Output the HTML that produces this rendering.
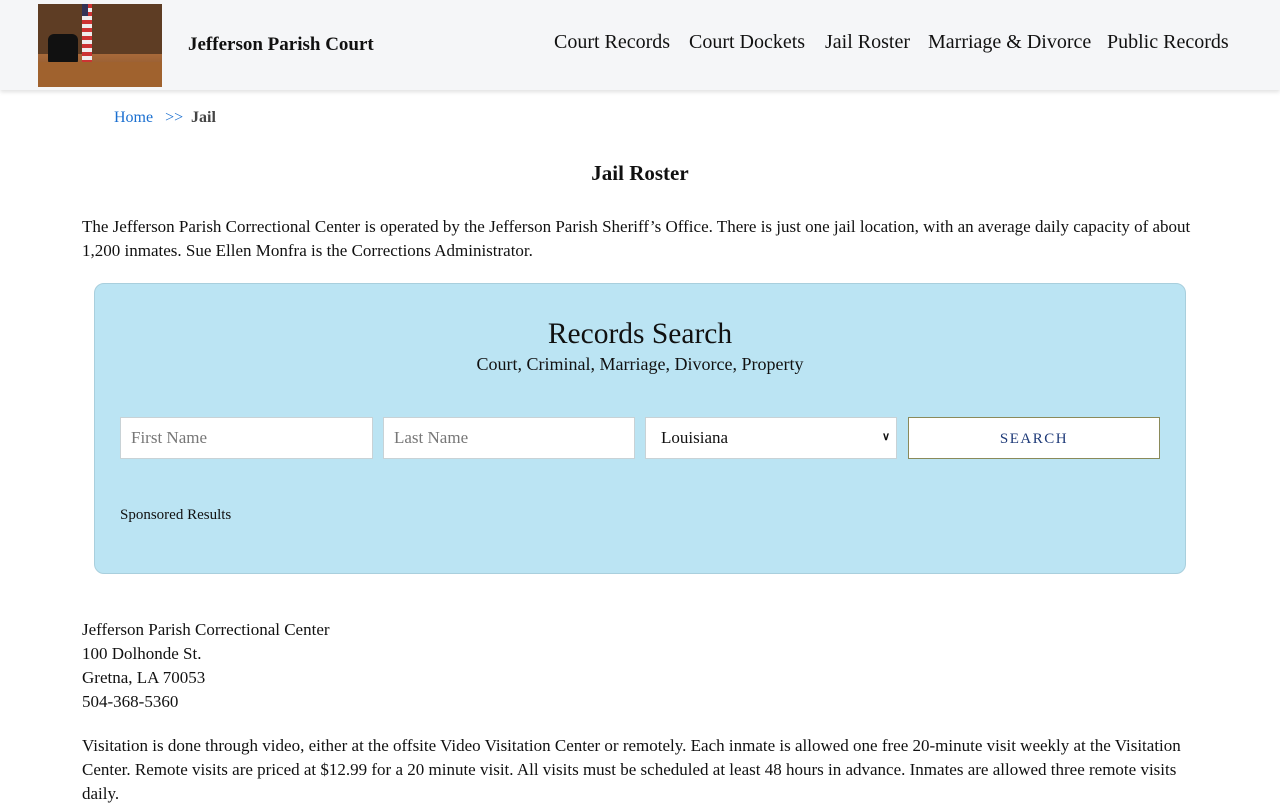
<!DOCTYPE html>
<html><head><meta charset="utf-8"><style>
body{margin:0;background:#fff;font-family:"Liberation Serif",serif;color:#111;}
.hdr{position:absolute;left:0;top:0;width:1280px;height:90px;background:#f5f6f8;box-shadow:0 2px 4px rgba(0,0,0,.12);}
.logo{position:absolute;left:38px;top:4px;width:124px;height:83px;background:linear-gradient(180deg,#6b4a2e 0%,#8a5a32 40%,#a86a3a 60%,#7a4a26 100%);overflow:hidden}
.nav a{position:absolute;top:31px;font-size:20px;color:#111;text-decoration:none;white-space:nowrap}
.t{position:absolute;white-space:nowrap}
p.b{position:absolute;left:82px;margin:0;font-size:17px;line-height:24px;width:1118px}
.box{position:absolute;left:94px;top:283px;width:1090px;height:289px;background:#bbe4f3;border:1px solid #a9cfdd;border-radius:10px}
.in{position:absolute;top:417px;height:42px;background:#fff;border:1px solid #c8d2d6;box-sizing:border-box;font-size:17px;color:#777;padding:10px 10px;font-family:"Liberation Serif",serif}
</style></head><body>
<div class="hdr">
<div class="logo">
<div style="position:absolute;left:0;top:0;width:124px;height:50px;background:#5e3d24"></div>
<div style="position:absolute;left:44px;top:0;width:10px;height:58px;background:repeating-linear-gradient(180deg,#c33 0 4px,#eee 4px 8px)"></div>
<div style="position:absolute;left:44px;top:0;width:6px;height:12px;background:#335"></div>
<div style="position:absolute;left:10px;top:30px;width:30px;height:32px;background:#111;border-radius:6px"></div>
<div style="position:absolute;left:0;top:58px;width:124px;height:25px;background:#a0622e"></div>
</div>
<div class="t" style="left:188px;top:34px;font-size:19px;font-weight:bold;color:#111">Jefferson Parish Court</div>
<div class="nav">
<a style="left:554px">Court Records</a>
<a style="left:689px">Court Dockets</a>
<a style="left:825px">Jail Roster</a>
<a style="left:928px">Marriage &amp; Divorce</a>
<a style="left:1107px">Public Records</a>
</div>
</div>
<div class="t" style="left:114px;top:109px;font-size:16px;color:#1a6fd0">Home&nbsp;&nbsp; &gt;&gt;</div>
<div class="t" style="left:191px;top:109px;font-size:16px;font-weight:bold;color:#444">Jail</div>
<div class="t" style="left:0;width:1280px;text-align:center;top:161px;font-size:21px;font-weight:bold">Jail Roster</div>
<p class="b" style="top:215px">The Jefferson Parish Correctional Center is operated by the Jefferson Parish Sheriff’s Office. There is just one jail location, with an average daily capacity of about 1,200 inmates. Sue Ellen Monfra is the Corrections Administrator.</p>
<div class="box"></div>
<div class="t" style="left:0;width:1280px;text-align:center;top:318px;font-size:29.5px">Records Search</div>
<div class="t" style="left:0;width:1280px;text-align:center;top:354px;font-size:18px">Court, Criminal, Marriage, Divorce, Property</div>
<div class="in" style="left:120px;width:253px">First Name</div>
<div class="in" style="left:383px;width:252px">Last Name</div>
<div class="in" style="left:645px;width:252px;color:#111;padding-left:15px">Louisiana<span style="position:absolute;right:6px;top:12px;font-size:11px;font-weight:bold">&#x2228;</span></div>
<div class="in" style="left:908px;width:252px;border-color:#8a8a5a;text-align:center;color:#1e3a78;letter-spacing:1.5px;font-size:15px;padding-top:13px">SEARCH</div>
<div class="t" style="left:120px;top:507px;font-size:15px">Sponsored Results</div>
<p class="b" style="top:618px">Jefferson Parish Correctional Center<br>100 Dolhonde St.<br>Gretna, LA 70053<br>504-368-5360</p>
<p class="b" style="top:734px">Visitation is done through video, either at the offsite Video Visitation Center or remotely. Each inmate is allowed one free 20-minute visit weekly at the Visitation Center. Remote visits are priced at $12.99 for a 20 minute visit. All visits must be scheduled at least 48 hours in advance. Inmates are allowed three remote visits daily.</p>
</body></html>
